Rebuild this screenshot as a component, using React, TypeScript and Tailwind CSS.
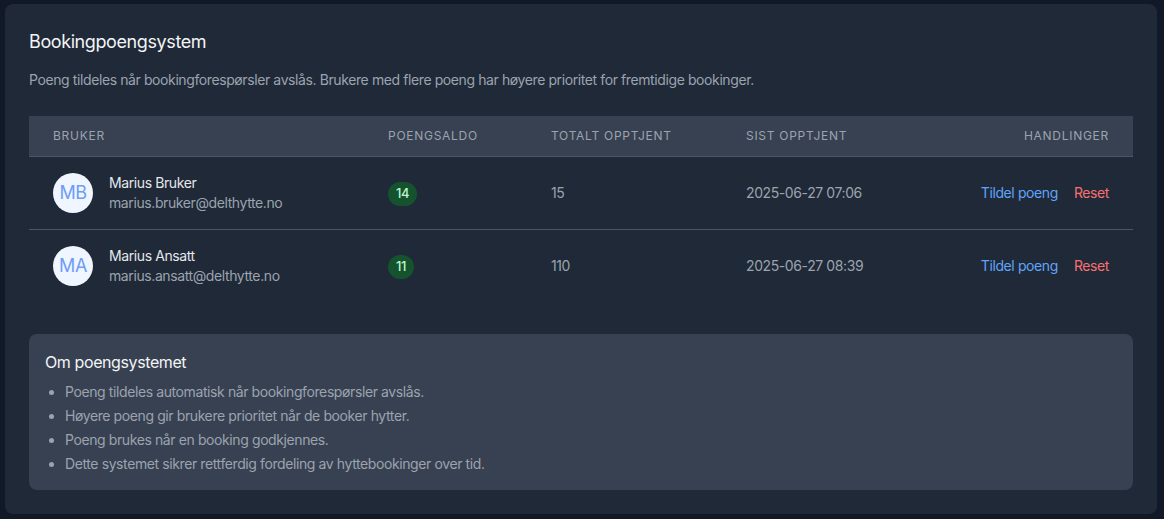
import React from "react";

const users = [
  { initials: "MB", name: "Marius Bruker", email: "marius.bruker@delthytte.no", points: 14, total: 15, last: "2025-06-27 07:06" },
  { initials: "MA", name: "Marius Ansatt", email: "marius.ansatt@delthytte.no", points: 11, total: 110, last: "2025-06-27 08:39" },
];

const cols = "grid grid-cols-[335px_163px_195px_1fr_auto]";

export default function App() {
  return (
    <div className="min-h-[519px] bg-[#111827] pt-[4px] pb-[5px] pl-[5px] pr-[7px] tracking-[-0.025em]" style={{ fontFamily: "Inter, 'Noto Sans', sans-serif" }}>
      <div className="bg-[#1f2937] rounded-lg p-6">
        <h2 className="text-lg leading-7 font-normal text-[#f3f4f6]">Bookingpoengsystem</h2>
        <p className="mt-[14px] text-sm leading-5 text-[#9ca3af]">
          Poeng tildeles når bookingforespørsler avslås. Brukere med flere poeng har høyere prioritet for fremtidige bookinger.
        </p>
        <div className="mt-[26px]">
          <div className={`${cols} bg-[#374151] border-b border-[#4b5563] text-xs leading-4 uppercase tracking-[0.06em] text-[#9ca3af]`}>
            <div className="px-6 py-3">Bruker</div>
            <div className="px-6 py-3">Poengsaldo</div>
            <div className="px-6 py-3">Totalt opptjent</div>
            <div className="px-6 py-3">Sist opptjent</div>
            <div className="px-6 py-3 text-right">Handlinger</div>
          </div>
          {users.map((u, i) => (
            <div key={u.email} className={`${cols} items-center ${i === 0 ? "border-b border-[#4b5563]" : ""}`}>
              <div className="px-6 py-4 flex items-center">
                <div className="w-10 h-10 rounded-full bg-[#eff6ff] flex items-center justify-center text-[#6f9cf6] text-lg">
                  {u.initials}
                </div>
                <div className="ml-4">
                  <div className="text-sm leading-5 font-normal text-[#e5e7eb]">{u.name}</div>
                  <div className="text-sm leading-5 text-[#9ca3af]">{u.email}</div>
                </div>
              </div>
              <div className="px-6 py-4">
                <span className="inline-flex items-center px-2 h-6 rounded-full bg-[#14532d] text-[#bbf7d0] text-[13px] font-medium">
                  {u.points}
                </span>
              </div>
              <div className="px-6 py-4 text-sm text-[#9ca3af]">{u.total}</div>
              <div className="px-6 py-4 text-sm text-[#9ca3af]">{u.last}</div>
              <div className="px-6 py-4 text-sm text-right whitespace-nowrap">
                <span className="text-[#60a5fa] mr-4">Tildel poeng</span>
                <span className="text-[#f87171]">Reset</span>
              </div>
            </div>
          ))}
        </div>
        <div className="mt-8 bg-[#374151] rounded-lg p-4">
          <h3 className="text-base leading-6 font-normal text-[#f3f4f6]">Om poengsystemet</h3>
          <ul className="mt-2 list-disc pl-5 text-sm leading-5 text-[#9ca3af] space-y-1">
            <li>Poeng tildeles automatisk når bookingforespørsler avslås.</li>
            <li>Høyere poeng gir brukere prioritet når de booker hytter.</li>
            <li>Poeng brukes når en booking godkjennes.</li>
            <li>Dette systemet sikrer rettferdig fordeling av hyttebookinger over tid.</li>
          </ul>
        </div>
      </div>
    </div>
  );
}
